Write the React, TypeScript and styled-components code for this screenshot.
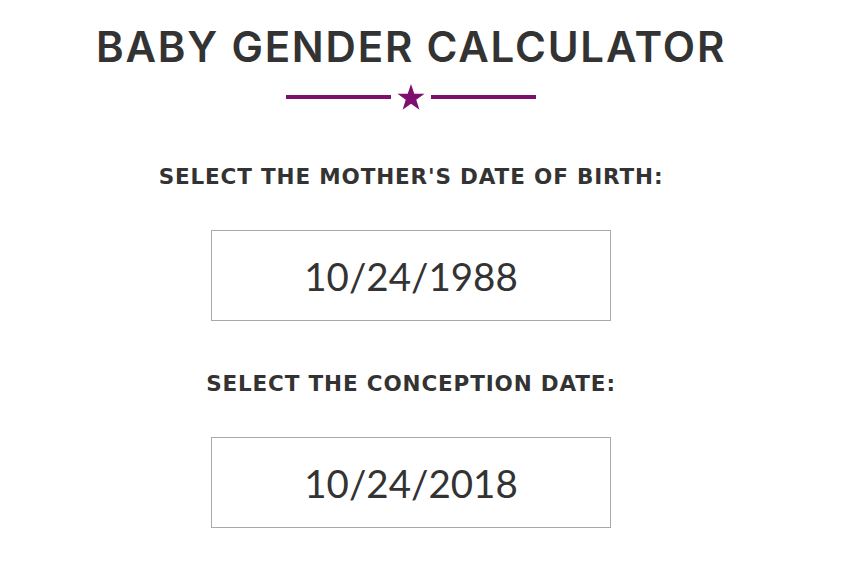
import React from "react";
import styled, { createGlobalStyle } from "styled-components";

const Global = createGlobalStyle`
  html, body { margin: 0; padding: 0; background: #fff; }
  body { font-family: "Lato", "Liberation Sans", sans-serif; color: #333; }
`;

const Page = styled.div`
  width: 822px;
  display: flex;
  flex-direction: column;
  align-items: center;
  padding-top: 22px;
`;

const Title = styled.h1`
  margin: 0;
  font-family: "Inter", "Liberation Sans", sans-serif;
  font-weight: 600;
  font-size: 42px;
  line-height: 50px;
  letter-spacing: 1.8px;
  color: #333;
`;

const Divider = styled.div`
  display: flex;
  align-items: center;
  gap: 6px;
  margin-top: 12px;
  height: 26px;
`;

const Bar = styled.span`
  display: block;
  width: 105px;
  height: 4px;
  background: #7f0f6e;
`;

const Label = styled.h2<{ $top: number }>`
  margin: 0;
  font-family: "DejaVu Sans", "Liberation Sans", sans-serif;
  font-weight: 700;
  font-size: 21.5px;
  line-height: 26px;
  letter-spacing: 0.85px;
  color: #333;
  margin-top: ${(p) => p.$top}px;
`;

const DateBox = styled.div<{ $top: number }>`
  box-sizing: border-box;
  width: 400px;
  height: 91px;
  border: 1px solid #aaa;
  display: flex;
  align-items: center;
  justify-content: center;
  font-family: "Lato", "Liberation Sans", sans-serif;
  font-size: 38.5px;
  color: #333;
  margin-top: ${(p) => p.$top}px;
`;

function Star() {
  return (
    <svg width="28" height="27" viewBox="0 0 24 23">
      <polygon
        points="12,0 14.8,8.3 23.6,8.3 16.5,13.5 19.2,22 12,16.8 4.8,22 7.5,13.5 0.4,8.3 9.2,8.3"
        fill="#7f0f6e"
      />
    </svg>
  );
}

export default function App() {
  return (
    <Page>
      <Global />
      <Title>BABY GENDER CALCULATOR</Title>
      <Divider>
        <Bar />
        <Star />
        <Bar />
      </Divider>
      <Label $top={54}>SELECT THE MOTHER'S DATE OF BIRTH:</Label>
      <DateBox $top={40}>10/24/1988</DateBox>
      <Label $top={50}>SELECT THE CONCEPTION DATE:</Label>
      <DateBox $top={40}>10/24/2018</DateBox>
    </Page>
  );
}
